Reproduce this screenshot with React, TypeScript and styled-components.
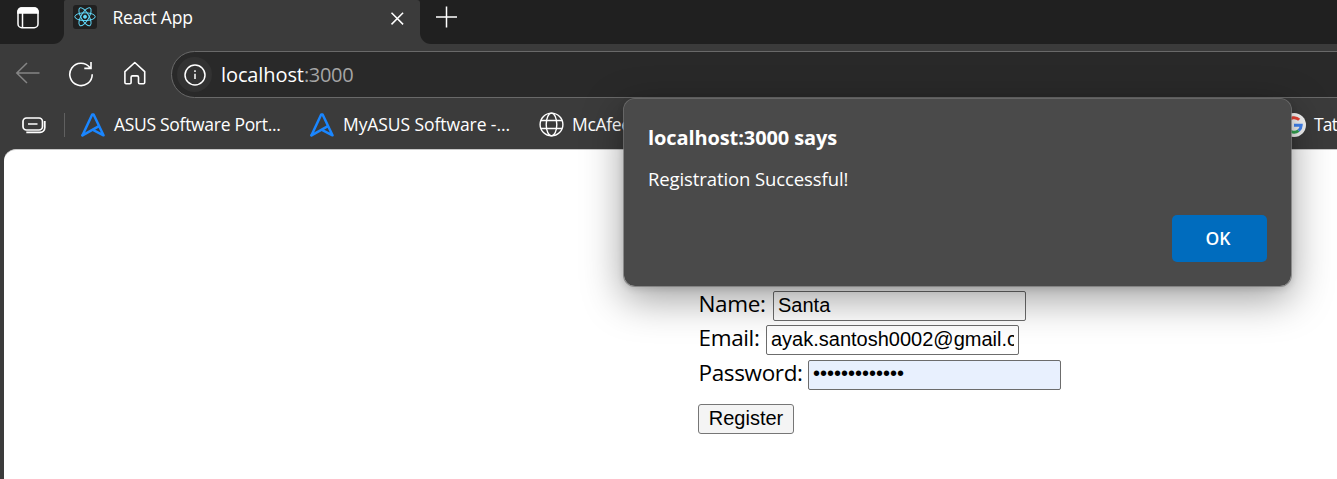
import React from 'react';
import styled, { createGlobalStyle } from 'styled-components';

const ui = `"Segoe UI", "Open Sans", "Noto Sans", sans-serif`;

const GlobalStyle = createGlobalStyle`
  * { box-sizing: border-box; }
  html, body { margin: 0; padding: 0; height: 100%; overflow: hidden; background: #3b3b3b; }
  svg { display: block; flex: none; }
`;

const Window = styled.div`
  position: relative;
  display: flex;
  flex-direction: column;
  width: 1337px;
  height: 479px;
  overflow: hidden;
  background: #3b3b3b;
  font-family: ${ui};
  color: #fff;
`;

const TabStrip = styled.div`
  display: flex;
  flex: none;
  height: 44px;
  background: linear-gradient(#202020 50%, #3b3b3b 50%);
`;

const TabActions = styled.div`
  width: 64px;
  padding: 6px 0 0 16px;
  background: #202020;
  border-bottom-right-radius: 11px;
`;

const Tab = styled.div`
  display: flex;
  width: 356px;
  padding: 5px 0 0 9px;
  background: #3b3b3b;
  border-radius: 2px 3px 0 0;
`;

const Favicon = styled.div`
  flex: none;
  width: 24px;
  height: 24px;
  border-radius: 3px;
  background: #202020;
`;

const Label = styled.span<{ $size: number; $spacing?: number; $weight?: number; $color?: string }>`
  display: block;
  white-space: nowrap;
  font-size: ${(p) => p.$size}px;
  line-height: 26px;
  letter-spacing: ${(p) => p.$spacing ?? 0}px;
  font-weight: ${(p) => p.$weight ?? 400};
  color: ${(p) => p.$color ?? '#fff'};
`;

const TabTitle = styled.div`
  flex: none;
  width: 293px;
  margin-top: -1px;
  padding-left: 15.5px;
`;

const CloseTab = styled.div`
  padding-top: 7px;
`;

const NewTab = styled.div`
  flex: 1;
  padding: 6px 0 0 16px;
  background: #202020;
  border-bottom-left-radius: 11px;
`;

const Toolbar = styled.div`
  display: flex;
  flex: none;
  height: 56px;
  padding: 7px 0 0 14px;
`;

const NavButtons = styled.div`
  display: flex;
  align-items: center;
  width: 157px;
  height: 46px;
  gap: 26px;
`;

const AddressBar = styled.div`
  display: flex;
  align-items: center;
  flex: 1;
  height: 47px;
  margin-right: -30px;
  padding-left: 5px;
  border: 1.5px solid #696969;
  border-radius: 24px;
  background: #292929;
`;

const SiteInfo = styled.div`
  display: flex;
  align-items: center;
  justify-content: center;
  width: 35px;
  height: 35px;
  margin-right: 9px;
  border-radius: 50%;
  background: #323232;
`;

const Bookmarks = styled.div`
  display: flex;
  align-items: center;
  flex: none;
  height: 49px;
  padding-left: 22px;
`;

const Divider = styled.div`
  flex: none;
  width: 1px;
  height: 24px;
  margin: 0 16px 0 18px;
  background: #606060;
`;

const Bookmark = styled.div<{ $width: number; $gap?: number }>`
  display: flex;
  align-items: center;
  flex: none;
  width: ${(p) => p.$width}px;
  gap: ${(p) => p.$gap ?? 9}px;
  ${Label} { margin-top: -1px; }
`;

const Page = styled.main`
  flex: 1;
  margin-left: 4px;
  padding: 141px 0 0 694px;
  background: #fff;
  border-top: 1px solid #c8c8c8;
  border-top-left-radius: 12px;
  color: #000;
`;

const Field = styled.label`
  display: flex;
  height: 34.4px;
`;

const FieldName = styled.span<{ $width: number }>`
  flex: none;
  width: ${(p) => p.$width}px;
  padding-left: 0.5px;
  white-space: nowrap;
  font-size: 22.5px;
  line-height: 26px;
  letter-spacing: -0.35px;
`;

const Input = styled.input`
  width: 253px;
  height: 30px;
  padding: 0 4px 1px;
  border: 1px solid #6c6c6c;
  border-radius: 2px;
  outline: 0;
  background: transparent;
  font: 20px "Liberation Sans", Arial, sans-serif;
  color: #000;
  &[type='password'] { padding-bottom: 3px; background: #e8f0fe; }
`;

const Register = styled.button`
  display: block;
  width: 96px;
  height: 30px;
  margin-top: 9.8px;
  padding: 0;
  border: 1px solid #767676;
  border-radius: 3px;
  background: #f4f4f4;
  font: 20px "Liberation Sans", Arial, sans-serif;
  color: #000;
`;

const Dialog = styled.div`
  position: absolute;
  left: 623px;
  top: 98px;
  width: 669px;
  height: 189px;
  padding: 26px 24px 0;
  border: 1px solid rgba(120, 120, 120, 0.75);
  border-radius: 12px;
  background: #4a4a4a;
  background-clip: padding-box;
  box-shadow: 0 12px 40px rgba(0, 0, 0, 0.38), 0 2px 6px rgba(0, 0, 0, 0.12);
`;

const Message = styled.div`
  margin-top: 15px;
`;

const DialogActions = styled.div`
  display: flex;
  justify-content: flex-end;
  margin-top: 23px;
`;

const OkButton = styled.button`
  width: 95px;
  height: 47px;
  padding: 0 3px 2px 0;
  border: 0;
  border-radius: 5px;
  background: #006cbe;
  color: #fff;
  font: 600 17.5px ${ui};
`;

const AsusIcon = () => (
  <svg width="24" height="24" viewBox="0 0 24 24" fill="none" stroke="#1a86ff" strokeWidth="2.5" strokeLinejoin="round" strokeLinecap="round">
    <path d="M1.5 22.3 11.2 1.5h1.4l9.9 20.8-9.6-5" />
    <path d="m1.5 22.3 16-9" />
  </svg>
);

const GlobeIcon = () => (
  <svg width="25" height="25" viewBox="0 0 25 25" fill="none" stroke="#fff" strokeWidth="1.4">
    <circle cx="12.5" cy="12.5" r="11.4" />
    <ellipse cx="12.5" cy="12.5" rx="5.3" ry="11.4" />
    <path d="M2 8.5h21M2 16.5h21" />
  </svg>
);

const GoogleIcon = () => (
  <svg width="24" height="24" viewBox="0 0 24 24" fill="none" strokeWidth="3">
    <circle cx="12" cy="12" r="12" fill="#f6f6f6" />
    <path d="M17.2 6.8A7.4 7.4 0 0 0 5.6 8.4" stroke="#ea4335" />
    <path d="M5.6 8.4a7.4 7.4 0 0 0 0 7.2" stroke="#fbbc05" />
    <path d="M5.6 15.6a7.4 7.4 0 0 0 11 2" stroke="#34a853" />
    <path d="M12 12.2h7.2a7.4 7.4 0 0 1-2.6 5.4" stroke="#4285f4" />
  </svg>
);

export default function App() {
  return (
    <>
      <GlobalStyle />
      <Window>
        <TabStrip>
          <TabActions>
            <svg width="24" height="24" viewBox="0 0 24 24" fill="none" stroke="#fff" strokeWidth="1.5">
              <rect x="2" y="2" width="20" height="19.7" rx="3.8" />
              <path d="M2 7V5.5A3.5 3.5 0 0 1 5.5 2h13A3.5 3.5 0 0 1 22 5.5V7Z" fill="#fff" />
              <path d="M6.5 7v14.5" />
            </svg>
          </TabActions>
          <Tab>
            <Favicon>
              <svg width="24" height="24" viewBox="0 0 24 24" fill="none" stroke="#61dafb" strokeWidth="1">
                <ellipse cx="12" cy="11.7" rx="10.2" ry="3.9" />
                <ellipse cx="12" cy="11.7" rx="10.2" ry="3.9" transform="rotate(60 12 11.7)" />
                <ellipse cx="12" cy="11.7" rx="10.2" ry="3.9" transform="rotate(120 12 11.7)" />
                <circle cx="12" cy="11.7" r="1.5" fill="#61dafb" />
              </svg>
            </Favicon>
            <TabTitle><Label $size={17.5} $spacing={-0.2}>React App</Label></TabTitle>
            <CloseTab>
              <svg width="14" height="14" viewBox="0 0 14 14" stroke="#fff" strokeWidth="1.5">
                <path d="m1.5 .8 11.6 11.6M13.1 .8 1.5 12.4" />
              </svg>
            </CloseTab>
          </Tab>
          <NewTab>
            <svg width="22" height="22" viewBox="0 0 22 22" stroke="#fff" strokeWidth="1.5">
              <path d="M0 11h21M10.5 .5v21" />
            </svg>
          </NewTab>
        </TabStrip>

        <Toolbar>
          <NavButtons>
            <svg width="28" height="28" viewBox="0 0 28 28" fill="none" stroke="#858585" strokeWidth="1.5">
              <path d="M25.5 13H3M13 3 2.8 13 13 23" />
            </svg>
            <svg width="28" height="28" viewBox="0 0 28 28" fill="none" stroke="#fff" strokeWidth="1.6">
              <path d="M24.2 14.3A11.2 11.2 0 1 1 21.9 7.6M23 2v6.4h-6.7" />
            </svg>
            <svg width="28" height="28" viewBox="0 0 28 28" fill="none" stroke="#fff" strokeWidth="1.6" strokeLinejoin="round">
              <path d="M2.9 11.7 12.8 2.5l9.9 9.2v10.8q0 1.2-1.2 1.2h-3.8q-1.2 0-1.2-1.2v-5.2q0-1.4-1.4-1.4h-4.6q-1.4 0-1.4 1.4v5.2q0 1.2-1.2 1.2H4.1q-1.2 0-1.2-1.2Z" />
            </svg>
          </NavButtons>
          <AddressBar>
            <SiteInfo>
              <svg width="22" height="22" viewBox="0 0 22 22" fill="none" stroke="#fff" strokeWidth="1.5">
                <circle cx="11" cy="11" r="10" />
                <path d="M11 9.7v5.4M11 6.3v1.7" />
              </svg>
            </SiteInfo>
            <Label $size={20} $spacing={-0.1}>localhost</Label>
            <Label $size={20} $spacing={-0.3} $color="#a5a5a5">:3000</Label>
          </AddressBar>
        </Toolbar>

        <Bookmarks>
          <svg width="24" height="18" viewBox="0 0 24 18" fill="none" stroke="#fff" strokeWidth="1.7">
            <rect x="1" y="2" width="19.5" height="12" rx="3.5" />
            <path d="M6 8h9.5M4.3 16.4H18a5 5 0 0 0 4.8-5V5" />
          </svg>
          <Divider />
          <Bookmark $width={229}><AsusIcon /><Label $size={17.5} $spacing={-0.3}>ASUS Software Port...</Label></Bookmark>
          <Bookmark $width={229}><AsusIcon /><Label $size={17.5} $spacing={-0.08}>MyASUS Software -...</Label></Bookmark>
          <Bookmark $width={743} $gap={8}><GlobeIcon /><Label $size={17.5} $spacing={-0.35}>McAfee</Label></Bookmark>
          <Bookmark $width={80} $gap={8}><GoogleIcon /><Label $size={17.5} $spacing={-0.8}>Tat</Label></Bookmark>
        </Bookmarks>

        <Page>
          <Field><FieldName $width={75}>Name:</FieldName><Input defaultValue="Santa" /></Field>
          <Field><FieldName $width={68}>Email:</FieldName><Input defaultValue="ayak.santosh0002@gmail.com" /></Field>
          <Field><FieldName $width={110}>Password:</FieldName><Input type="password" defaultValue="santosh000212" /></Field>
          <Register>Register</Register>
        </Page>

        <Dialog>
          <Label $size={20} $weight={700} $spacing={-0.1}>localhost:3000 says</Label>
          <Message><Label $size={18.5} $spacing={-0.1}>Registration Successful!</Label></Message>
          <DialogActions><OkButton>OK</OkButton></DialogActions>
        </Dialog>
      </Window>
    </>
  );
}
